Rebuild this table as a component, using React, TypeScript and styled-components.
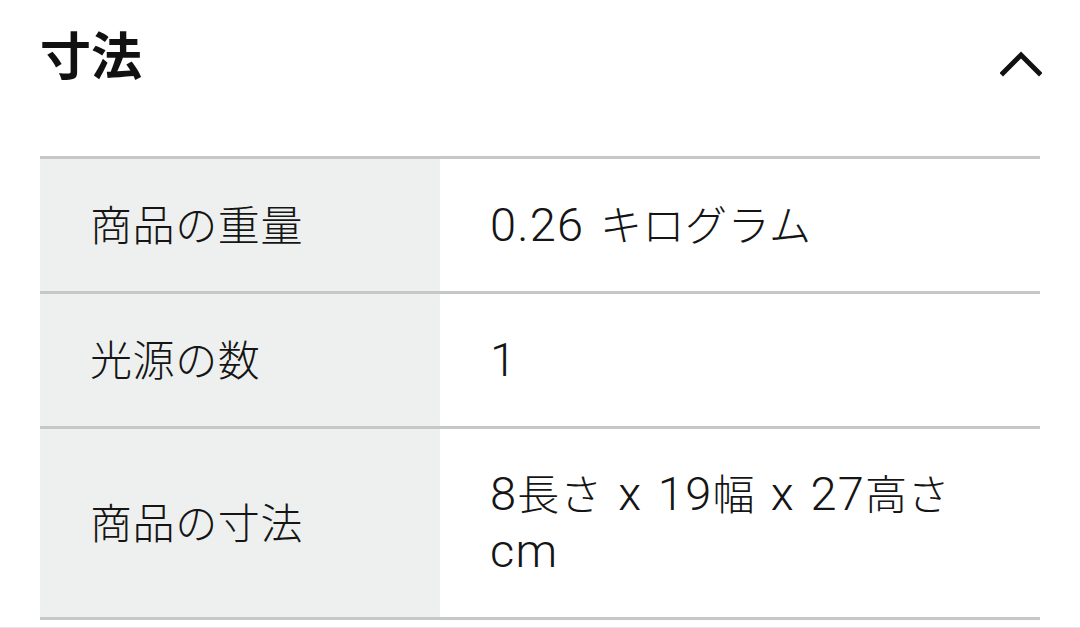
import styled, { createGlobalStyle } from 'styled-components';

const GlobalStyle = createGlobalStyle`
    html, body {
        margin: 0;
        padding: 0;
        background: #ffffff;
    }
    body {
        font-family: "Noto Sans CJK JP", sans-serif;
        color: #151515;
    }
`;

const Page = styled.div`
    width: 1080px;
    height: 628px;
    overflow: hidden;
    border-bottom: 1px solid #e6e6e6;
    box-sizing: border-box;
`;

const Header = styled.div`
    display: flex;
    align-items: center;
    justify-content: space-between;
    height: 116px;
    padding: 0 38px 0 40px;
`;

const Title = styled.h2`
    margin: 0 0 10px;
    font-family: "Noto Sans CJK JP", sans-serif;
    font-weight: 700;
    font-size: 51px;
    line-height: 1;
    color: #111;
`;

const Toggle = styled.button`
    border: none;
    background: none;
    padding: 0;
    display: flex;
    margin-top: 12px;
`;

const Table = styled.div`
    margin: 40px 40px 0;
    display: grid;
    grid-template-columns: 400px 600px;
    border-top: 3px solid #c6c7c7;
`;

const Cell = styled.div<{ $label?: boolean }>`
    display: flex;
    align-items: center;
    padding: 34px ${(p) => (p.$label ? '40px' : '70px')} 40px 50px;
    min-height: 58px;
    background: ${(p) => (p.$label ? '#eef0ef' : '#ffffff')};
    border-bottom: 3px solid #c6c7c7;
    font-size: 42px;
    font-weight: 300;
    letter-spacing: 0.6px;
    line-height: 57px;
    color: #151515;
`;

const Text = styled.span`
    display: block;
`;

// latin runs are set a size up, as on the device
const Latin = styled.span`
    font-family: Roboto, "Liberation Sans", sans-serif;
    font-weight: 300;
    font-size: 47px;
    line-height: 30px;
    letter-spacing: 1.2px;
    word-spacing: 3px;
`;

const split = (s: string) =>
    s.split(/([\u3000-\u30ff\u4e00-\u9fff]+)/).map((part, i) =>
        i % 2 === 1 ? part : part ? <Latin key={i}>{part}</Latin> : null
    );

const rows = [
    { label: '商品の重量', value: '0.26 キログラム' },
    { label: '光源の数', value: '1' },
    { label: '商品の寸法', value: '8長さ x 19幅 x 27高さ cm' },
];

const App = () => {
    return (
        <>
            <GlobalStyle />
            <Page>
                <Header>
                    <Title>寸法</Title>
                    <Toggle aria-label="閉じる">
                        <svg width="42" height="26" viewBox="0 0 42 26">
                            <path
                                d="M3 22 L21 4 L39 22"
                                fill="none"
                                stroke="#111"
                                strokeWidth="5"
                                strokeLinecap="square"
                            />
                        </svg>
                    </Toggle>
                </Header>
                <Table>
                    {rows.map((r) => (
                        <>
                            <Cell $label key={r.label}>{r.label}</Cell>
                            <Cell key={r.label + '-v'}>
                                <Text>{split(r.value)}</Text>
                            </Cell>
                        </>
                    ))}
                </Table>
            </Page>
        </>
    );
};

export default App;
